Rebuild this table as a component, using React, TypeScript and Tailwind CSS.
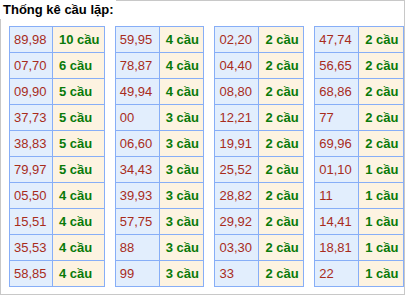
import React from "react";

const tables: [string, string][][] = [
    [["89,98", "10"], ["07,70", "6"], ["09,90", "5"], ["37,73", "5"], ["38,83", "5"], ["79,97", "5"], ["05,50", "4"], ["15,51", "4"], ["35,53", "4"], ["58,85", "4"]],
    [["59,95", "4"], ["78,87", "4"], ["49,94", "4"], ["00", "3"], ["06,60", "3"], ["34,43", "3"], ["39,93", "3"], ["57,75", "3"], ["88", "3"], ["99", "3"]],
    [["02,20", "2"], ["04,40", "2"], ["08,80", "2"], ["12,21", "2"], ["19,91", "2"], ["25,52", "2"], ["28,82", "2"], ["29,92", "2"], ["03,30", "2"], ["33", "2"]],
    [["47,74", "2"], ["56,65", "2"], ["68,86", "2"], ["77", "2"], ["69,96", "2"], ["01,10", "1"], ["11", "1"], ["14,41", "1"], ["18,81", "1"], ["22", "1"]],
];

const CauTable = ({ rows, wide }: { rows: [string, string][]; wide: boolean }) => {
    return (
        <table className={"border-collapse table-fixed " + (wide ? "w-[96px]" : "w-[90px]")}>
            <colgroup>
                <col className={wide ? "w-[43px]" : "w-[44px]"} />
                <col />
            </colgroup>
            <tbody>
                {rows.map(([pair, count]) => (
                    <tr key={pair} className="h-[26px]">
                        <td className="border border-[#87aef7] bg-[#e2eefd] pl-[4px] text-[#a82c1c] whitespace-nowrap">{pair}</td>
                        <td className="border border-[#87aef7] bg-[#fdf3e1] pl-[6px] font-bold text-[#097a09] whitespace-nowrap">
                            {count} cầu
                        </td>
                    </tr>
                ))}
            </tbody>
        </table>
    );
};

export default function App() {
    return (
        <div className="w-[405px] h-[295px] border border-[#c8c8c8] bg-white text-[13px] leading-none font-['Liberation_Sans',Arial,sans-serif]">
            {/* title sits over the box border */}
            <div className="-mt-px -ml-px h-[19px] w-[116px] bg-white pl-[3px] pt-[3px] font-bold text-black">
                Thống kê cầu lặp:
            </div>
            <div className="mt-[7px] ml-[8px] flex gap-[10px]">
                {tables.map((rows, i) => (
                    <CauTable key={i} rows={rows} wide={i === 0} />
                ))}
            </div>
        </div>
    );
}
